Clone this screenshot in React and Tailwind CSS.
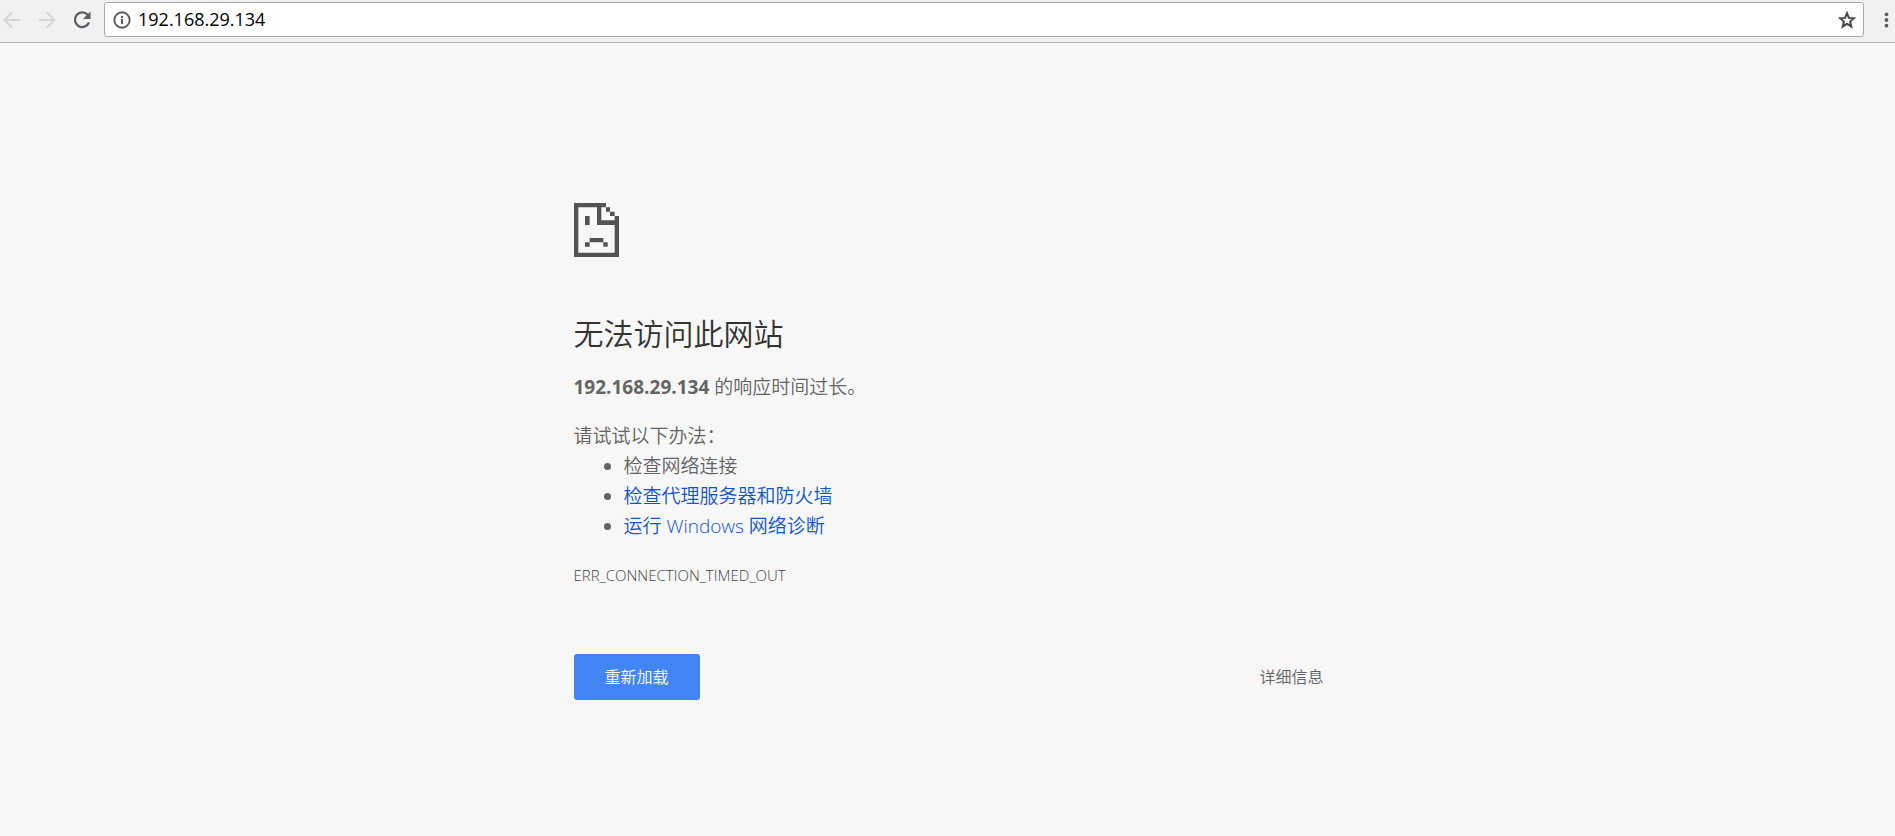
import React from 'react';

const ErrorPageIcon = () => (
  <svg className="block h-[54px] w-[45px]" viewBox="0 0 135 162" fill="#535353" aria-hidden="true">
    <path d="M0 0h96v13H0zM0 0h13v162H0zM0 149h135v13H0zM122 39h13v123h-13zM69 0h13v66H69zM69 52h66v14H69zM96 13h12v13H96zM108 26h14v13h-14z" />
    <path d="M33 39h14v27H33zM47 105h41v13H47zM33 118h14v13H33zM88 118h13v13H88z" />
  </svg>
);

const Toolbar = () => (
  <header className="flex h-[43px] items-start border-b border-[#b6b4b6] bg-[#f1f1f1] pt-[2px]">
    <nav className="flex h-[35px] shrink-0 items-center gap-[15px] pl-[2px]">
      <button type="button" aria-label="后退" className="h-5 w-5" disabled>
        <svg className="h-5 w-5" viewBox="0 0 20 20" fill="none" stroke="#d3d5d6" strokeWidth="2">
          <path d="M18 10H3M10 2.5L2.5 10l7.5 7.5" />
        </svg>
      </button>
      <button type="button" aria-label="前进" className="h-5 w-5" disabled>
        <svg className="h-5 w-5" viewBox="0 0 20 20" fill="none" stroke="#d3d5d6" strokeWidth="2">
          <path d="M2 10h15M10 2.5l7.5 7.5-7.5 7.5" />
        </svg>
      </button>
      <button type="button" aria-label="重新加载此页" className="h-5 w-5">
        <svg className="h-5 w-5" viewBox="0 0 20 20">
          <path d="M15.8 5A7.3 7.3 0 1 0 17 12.5" fill="none" stroke="#5a5d61" strokeWidth="2.3" />
          <path d="M18.500 1.500v7.500H11z" fill="#5a5d61" />
        </svg>
      </button>
    </nav>
    <form className="ml-[12px] flex h-[35px] min-w-0 flex-1 items-center rounded-[3px] border border-[#a8a8a8] bg-white pr-[7px] pl-[8px]">
      <svg className="h-[18px] w-[18px] shrink-0" viewBox="0 0 18 18" aria-hidden="true">
        <circle cx="9" cy="9" r="7.7" fill="none" stroke="#5a5a5a" strokeWidth="1.9" />
        <path d="M8 8h2v5H8zM8 5h2v2H8z" fill="#5a5a5a" />
      </svg>
      <input
        type="text"
        aria-label="地址"
        defaultValue="192.168.29.134"
        className="ml-[7px] h-[33px] min-w-0 flex-1 pb-[2px] font-['Open_Sans','Noto_Sans_CJK_SC',sans-serif] text-[18px] font-normal text-black outline-none"
      />
      <button type="button" aria-label="收藏" className="h-[18px] w-[18px]">
        <svg className="h-[18px] w-[18px]" viewBox="0 0 18 18" fill="none" stroke="#484848" strokeWidth="2">
          <path d="M9 2.200l1.900 4.700 5 .4-3.800 3.200 1.200 5L9 12.800l-4.300 2.700 1.200-5-3.800-3.200 5-.4z" />
        </svg>
      </button>
    </form>
    <button type="button" aria-label="菜单" className="ml-[14px] flex h-[35px] w-[17px] shrink-0 items-center justify-center">
      <svg className="h-[18px] w-[18px]" viewBox="0 0 18 18" fill="#5a5d61">
        <circle cx="9" cy="3" r="2" />
        <circle cx="9" cy="9" r="2" />
        <circle cx="9" cy="15" r="2" />
      </svg>
    </button>
  </header>
);

const App = () => {
  return (
    <div className="min-h-screen bg-[#f7f7f7] font-['Open_Sans','Noto_Sans_CJK_SC',sans-serif] font-[350] text-[#646464]">
      <Toolbar />
      <main className="mx-auto max-w-[752px] pt-[160px] pl-[2px]">
        <ErrorPageIcon />
        <h1 className="mt-[55px] text-[30px] leading-[44px] font-[350] text-[#333]">无法访问此网站</h1>
        <div className="text-[19px] leading-[30px]">
          <p className="mt-[16px]">
            <strong className="font-bold">192.168.29.134</strong> 的响应时间过长。
          </p>
          <p className="mt-[19px]">请试试以下办法：</p>
          <ul className="list-disc pl-[50px]">
            <li>检查网络连接</li>
            <li>
              <a href="#proxy" className="text-[#1155cc]">检查代理服务器和防火墙</a>
            </li>
            <li>
              <a href="#diagnose" className="text-[#1155cc]">运行 Windows 网络诊断</a>
            </li>
          </ul>
        </div>
        <p className="mt-[19px] text-[15px] leading-[30px] text-[#444]">ERR_CONNECTION_TIMED_OUT</p>
        <div className="mt-[64px] flex items-center justify-between text-[16px]">
          <button type="button" className="h-[46px] rounded-[3px] bg-[#4285f4] px-[31px] text-white">
            重新加载
          </button>
          <button type="button">详细信息</button>
        </div>
      </main>
    </div>
  );
};

export default App;
